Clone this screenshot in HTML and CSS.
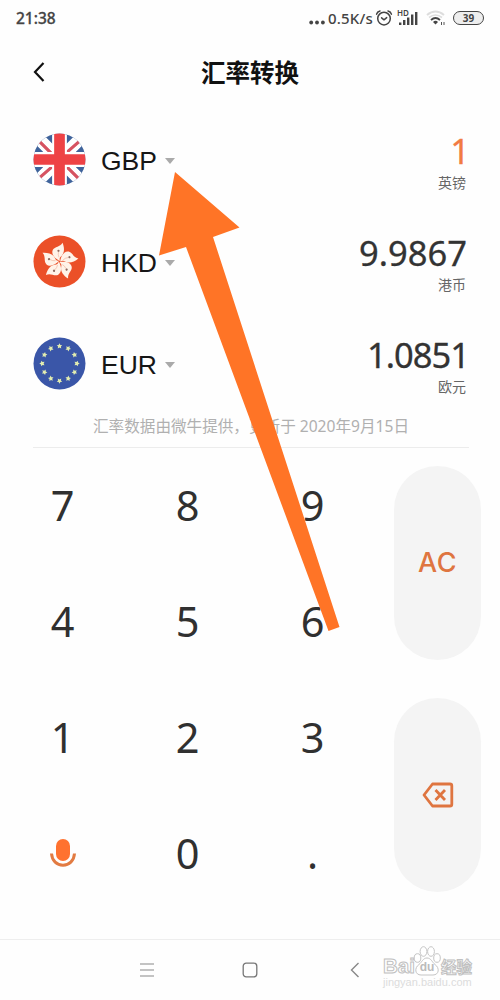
FILE: index.html
```html
<!DOCTYPE html>
<html lang="zh-CN">
<head>
<meta charset="utf-8">
<title>汇率转换</title>
<link rel="stylesheet" href="styles.css">
</head>
<body>
<div class="screen">
  <div class="status">
    <span class="time">21:38</span>
    <div class="status-right">
      <svg class="dots" width="17" height="18" viewBox="0 0 17 18"><g fill="#444"><circle cx="2.2" cy="11.500" r="1.9"/><circle cx="8" cy="11.500" r="1.9"/><circle cx="13.900" cy="11.500" r="1.9"/></g></svg>
      <span class="speed">0.5K/s</span>
      <svg class="alarm" width="18" height="18" viewBox="0 0 18 18" fill="none" stroke="#444" stroke-width="1.5" stroke-linecap="round" stroke-linejoin="round"><circle cx="9" cy="9.6" r="6.3"/><path d="M6.6 8.8 9 10.8l2.7-2.2M1.6 5.2C2 3.5 3.2 2.4 5 2M16.4 5.2C16 3.5 14.8 2.4 13 2"/></svg>
      <div class="signal">
        <svg width="20" height="18" viewBox="0 0 20 18"><path d="M1 13.500h2.400V16H1zM5 11h2.400v5H5zM9 8.500h2.400V16H9zM13 5.500h2.400V16H13zM17 3h2.400v13H17z" fill="#444"/></svg>
        <span class="hd">HD</span>
      </div>
      <svg class="wifi" width="20" height="18" viewBox="0 0 20 18" fill="none"><path d="M1 6Q9.500-1 18 6" stroke="#ddd" stroke-width="2"/><path d="M3 8.500Q9.500 3.500 16 8.500" stroke="#ddd" stroke-width="1.600"/><path d="M5 11Q9.500 7 14 11" stroke="#444" stroke-width="1.800"/><path d="M7 13Q9.500 10.500 12 13L9.500 15.500Z" fill="#444"/><path d="M15.500 13v3M18 13v3" stroke="#555"/></svg>
      <span class="battery">39</span>
    </div>
  </div>

  <header class="header">
    <svg class="back" width="12" height="20" viewBox="0 0 12 20"><path d="M10.500 1 2 10l8.500 9" fill="none" stroke="#111" stroke-width="2.200"/></svg>
    <h1 class="title">汇率转换</h1>
  </header>

  <main class="rates">
    <div class="rate">
      <svg class="flag" viewBox="0 0 52 52">
        <clipPath id="disc"><circle cx="26" cy="26" r="25.500"/></clipPath>
        <g clip-path="url(#disc)">
          <path fill="#3f639b" d="M0 0h52v52H0z"/>
          <path d="M4 4 48 48M48 4 4 48" stroke="#fff" stroke-width="12"/>
          <path d="M5 7 20 22M48 6 32 20M4 46 20 32M32 32 47 47" stroke="#d65361" stroke-width="3.200"/>
          <path d="M26 0v52M0 26h52" stroke="#fff" stroke-width="14.500"/>
          <path d="M26 0v52M0 26h52" stroke="#ee4245" stroke-width="10.500"/>
        </g>
      </svg>
      <span class="code">GBP</span><i class="caret"></i>
      <div class="value"><span class="amount active">1</span><span class="unit">英镑</span></div>
    </div>
    <div class="rate">
      <svg class="flag" viewBox="0 0 52 52">
        <defs><g id="petal"><path d="M26.500 25.500C21 23 17.500 18.500 19.500 14.500 21.500 11 26.500 12 29 7.500 31 12.500 31 17.500 28 20.500 26 22 25.800 23.500 26.500 25.500Z" fill="#fff4e9"/><circle cx="25" cy="15.500" r="1.100" fill="#8f6b60"/><path d="M25 16.500Q24.300 19.500 25.500 22" stroke="#efb39c" stroke-width=".6" fill="none"/></g></defs>
        <circle cx="26" cy="26" r="25.500" fill="#eb5028"/>
        <use href="#petal"/><use href="#petal" transform="rotate(72 26 26)"/><use href="#petal" transform="rotate(144 26 26)"/><use href="#petal" transform="rotate(216 26 26)"/><use href="#petal" transform="rotate(288 26 26)"/>
      </svg>
      <span class="code">HKD</span><i class="caret"></i>
      <div class="value"><span class="amount">9.9867</span><span class="unit">港币</span></div>
    </div>
    <div class="rate">
      <svg class="flag" viewBox="0 0 52 52">
        <defs><path id="star" d="m26 6.200.9 1.600 1.800.3-1.300 1.300.3 1.900-1.700-.9-1.700.9.300-1.900-1.300-1.300 1.800-.3z" fill="#e2ecb0"/></defs>
        <circle cx="26" cy="26" r="25.500" fill="#3a56a8"/>
        <use href="#star"/><use href="#star" transform="rotate(30 26 26)"/><use href="#star" transform="rotate(60 26 26)"/><use href="#star" transform="rotate(90 26 26)"/><use href="#star" transform="rotate(120 26 26)"/><use href="#star" transform="rotate(150 26 26)"/><use href="#star" transform="rotate(180 26 26)"/><use href="#star" transform="rotate(210 26 26)"/><use href="#star" transform="rotate(240 26 26)"/><use href="#star" transform="rotate(270 26 26)"/><use href="#star" transform="rotate(300 26 26)"/><use href="#star" transform="rotate(330 26 26)"/>
      </svg>
      <span class="code">EUR</span><i class="caret"></i>
      <div class="value"><span class="amount tight">1.0851</span><span class="unit">欧元</span></div>
    </div>
    <p class="note">汇率数据由微牛提供，更新于 2020年9月15日</p>
  </main>

  <section class="pad">
    <div class="keys">
      <span>7</span><span>8</span><span>9</span>
      <span>4</span><span>5</span><span>6</span>
      <span>1</span><span>2</span><span>3</span>
      <span><svg width="28" height="32" viewBox="0 0 28 32"><rect x="7" y="2" width="14" height="22" rx="7" fill="#ff7230"/><path d="M2.500 16.500C3 24 8 28.200 14 28.200S25 24 25.500 16.500" fill="none" stroke="#e27b42" stroke-width="3"/></svg></span><span>0</span><span>.</span>
    </div>
    <div class="actions">
      <div class="pill">AC</div>
      <div class="pill"><svg width="32" height="26" viewBox="0 0 32 26" fill="none" stroke="#df7540" stroke-width="2.800" stroke-linejoin="round"><path d="M10.500 2H28q1.800 0 1.800 1.800v18.400q0 1.800-1.800 1.800H10.500L2 13Z"/><path d="m13.500 8 9.500 10m0-10-9.500 10"/></svg></div>
    </div>
  </section>

  <footer class="nav">
    <svg class="menu" width="16" height="16" viewBox="0 0 16 16"><path d="M1 2h14M1 8h14M1 14h14" stroke="#888" stroke-width="1.200"/></svg>
    <svg class="home" width="16" height="16" viewBox="0 0 16 16"><rect x="1.200" y="1.200" width="13.600" height="13.600" rx="3" fill="none" stroke="#777" stroke-width="1.300"/></svg>
    <svg class="prev" width="10" height="16" viewBox="0 0 10 16"><path d="M8.500 1 1.500 8l7 7" fill="none" stroke="#888" stroke-width="1.400"/></svg>
  </footer>

  <div class="watermark">
    <div class="brand">
      <span class="bai">Bai</span>
      <span class="paw"><svg width="28" height="30" viewBox="0 0 28 30" fill="#fff" stroke="#c4c4c4" stroke-width="1"><ellipse cx="4.500" cy="12" rx="3.300" ry="4.300"/><ellipse cx="10.500" cy="5.500" rx="3.400" ry="4.800"/><ellipse cx="18" cy="5.500" rx="3.400" ry="4.800"/><ellipse cx="24" cy="12" rx="3.300" ry="4.300"/><path d="M14 12C10 12 9 16 6 18.500 1 22 2 29 8 29h12c6 0 7-7 2-10.500C19 16 18 12 14 12Z"/></svg><b>du</b></span>
      <span class="jy">经验</span>
    </div>
    <div class="site">jingyan.baidu.com</div>
  </div>

  <svg class="arrow" width="500" height="1000" viewBox="0 0 500 1000"><path d="M175 172 239.500 227.500 213 237 339.500 627 328.500 631 186 247 159 255.500Z" fill="#ff7426"/></svg>
</div>
</body>
</html>
```
FILE: styles.css
```css
* { box-sizing: border-box; }
body {
  margin: 0;
  background: #fefefe;
  color: #333;
  font-family: "Noto Sans", "Noto Sans CJK SC", sans-serif;
}
.screen {
  position: relative;
  width: 500px;
  height: 1000px;
  overflow: hidden;
}
.screen svg { display: block; flex: none; }

.status {
  display: flex;
  justify-content: space-between;
  align-items: center;
  height: 35px;
  padding: 0 16px;
  color: #444;
}
.time { font: 500 15.500px/20px "Noto Sans", sans-serif; -webkit-text-stroke: .3px currentColor; }
.status-right { display: flex; align-items: center; }
.dots { margin-top: 4px; }
.speed { width: 49px; padding-left: 2px; font: 500 15px/20px "Noto Sans", sans-serif; letter-spacing: .2px; }
.alarm { margin-right: 5px; }
.signal { position: relative; margin-right: 8px; margin-top: 1px; }
.hd { position: absolute; left: -1px; top: 0; font: 600 8px/8px "Noto Sans", sans-serif; }
.wifi { margin-right: 7px; }
.battery {
  width: 31px;
  height: 14px;
  border: 1.500px solid #444;
  border-radius: 7px;
  background: #eee;
  font: 700 10px/12px "Noto Sans", sans-serif;
  text-align: center;
}

.header {
  display: grid;
  grid-template-columns: 60px 1fr 60px;
  align-items: center;
  height: 73px;
}
.back { justify-self: start; margin-left: 33px; }
.title {
  margin: 0;
  color: #111;
  font: 700 24.500px/36px "Noto Sans CJK SC", sans-serif;
  text-align: center;
}

.rates {
  height: 340px;
  margin: 0 31px 0 33px;
  border-bottom: 1px solid #ececec;
}
.rate { display: flex; align-items: center; height: 102px; }
.flag { width: 53px; height: 53px; }
.code {
  width: 57px;
  margin-left: 15px;
  padding-top: 3px;
  color: #161616;
  font: 26.500px/30px "Liberation Sans", sans-serif;
}
.caret {
  margin: 3px 0 0 7px;
  border: 5px solid transparent;
  border-top: 6px solid #aaa;
  border-bottom: 0;
}
.value { display: flex; flex-direction: column; margin: 3px 3px 0 auto; text-align: right; }
.amount { margin-right: -1px; color: #333; font: 400 34.500px/44px "Noto Sans", sans-serif; -webkit-text-stroke: .3px currentColor; }
.tight { margin-right: -3px; letter-spacing: -1px; }
.active { margin-right: -4px; color: #f27b43; }
.unit { margin-top: -1px; color: #666; font: 14px/20px "Noto Sans CJK SC", sans-serif; }
.note {
  margin: 1px -5px 0;
  color: #b0b0b0;
  font: 15.600px/22px "Noto Sans", "Noto Sans CJK SC", sans-serif;
  text-align: center;
  white-space: nowrap;
}

.pad { display: grid; grid-template-columns: 375px 1fr; height: 492px; margin-top: -1px; }
.keys {
  display: grid;
  grid-template-columns: repeat(3, 125px);
  grid-template-rows: repeat(4, 116px);
  place-items: center;
  font: 41.500px/50px "Noto Sans", sans-serif;
  color: #303030;
}
.actions { display: flex; flex-direction: column; gap: 38px; padding: 19px 19px 0; }
.pill {
  display: grid;
  place-items: center;
  height: 194px;
  border-radius: 44px;
  background: #f4f4f4;
  color: #df7540;
  font: 500 27px/32px Inter, sans-serif;
  letter-spacing: .5px;
}

.nav {
  display: flex;
  align-items: center;
  height: 61px;
  padding-left: 139px;
  border-top: 1px solid #eee;
}
.home { margin-left: 87px; }
.prev { margin-left: 92px; }

.watermark { position: absolute; left: 383px; top: 945px; width: 90px; }
.brand { display: flex; align-items: flex-end; height: 31px; }
.bai, .jy { color: #fff; -webkit-text-stroke: 1px #c0c0c0; }
.bai { width: 30px; font: 700 20.500px/20px "Liberation Sans", sans-serif; }
.paw { position: relative; width: 28px; }
.paw b {
  position: absolute;
  left: 0;
  width: 28px;
  bottom: 2px;
  color: #bbb;
  font: 700 12px/14px "Liberation Sans", sans-serif;
  text-align: center;
}
.jy { font: 700 15.500px/20px "Noto Sans CJK SC", sans-serif; }
.site { color: #dcdcdc; font: 11px/13px "Liberation Sans", sans-serif; white-space: nowrap; }

.arrow { position: absolute; left: 0; top: 0; }
```
